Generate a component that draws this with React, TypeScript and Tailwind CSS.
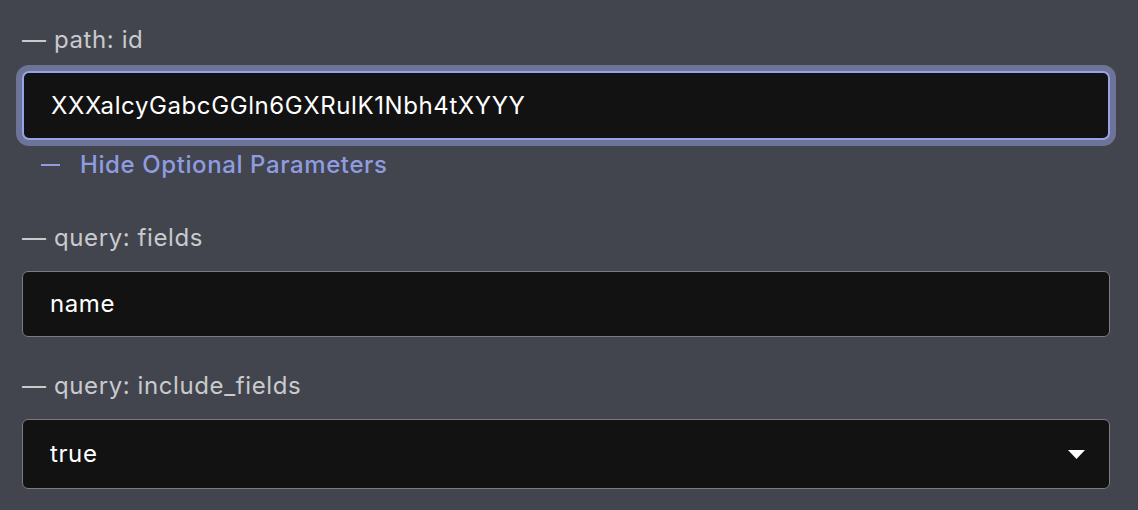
import React from "react";

function Label({ children, className = "" }: { children: React.ReactNode; className?: string }) {
  return (
    <div className={`h-[28px] leading-[28px] text-[24px] tracking-[0.6px] text-[#c9cacd] ${className}`}>
      — {children}
    </div>
  );
}

export default function App() {
  return (
    <div
      className="w-[1138px] h-[510px] bg-[#42454d] pl-[22px] pr-[28px] pt-[26px] overflow-hidden"
      style={{ fontFamily: "Inter, 'Noto Sans', sans-serif" }}
    >
      <Label>path: id</Label>
      <div className="mt-[17px] h-[69px] rounded-[7px] border-2 border-[#98a2e6] bg-[#121212] shadow-[0_0_0_6px_#6e7498] flex items-center pl-[27px] text-[24px] tracking-[0.6px] text-white">
        XXXalcyGabcGGln6GXRulK1Nbh4tXYYY
      </div>
      <div className="mt-[11px] h-[28px] leading-[28px] flex items-center text-[24px] tracking-[0.6px] font-medium text-[#8f9ce2]">
        <span className="ml-[19px] inline-block w-[19px] h-[2px] bg-[#8f9ce2]" />
        <span className="ml-[20px]">Hide Optional Parameters</span>
      </div>
      <Label className="mt-[45px]">query: fields</Label>
      <div className="mt-[19px] h-[66px] rounded-[6px] border border-[#7c7c7e] bg-[#121212] flex items-center pl-[27px] text-[24px] tracking-[0.6px] text-white">
        name
      </div>
      <Label className="mt-[35px]">query: include_fields</Label>
      <div className="mt-[19px] h-[70px] rounded-[6px] border border-[#7c7c7e] bg-[#121212] flex items-center justify-between pl-[27px] pr-[24px] text-[24px] tracking-[0.6px] text-white">
        <span>true</span>
        <svg width="17" height="9" viewBox="0 0 17 9">
          <path d="M0 0 L17 0 L8.5 9 Z" fill="#ffffff" />
        </svg>
      </div>
    </div>
  );
}
